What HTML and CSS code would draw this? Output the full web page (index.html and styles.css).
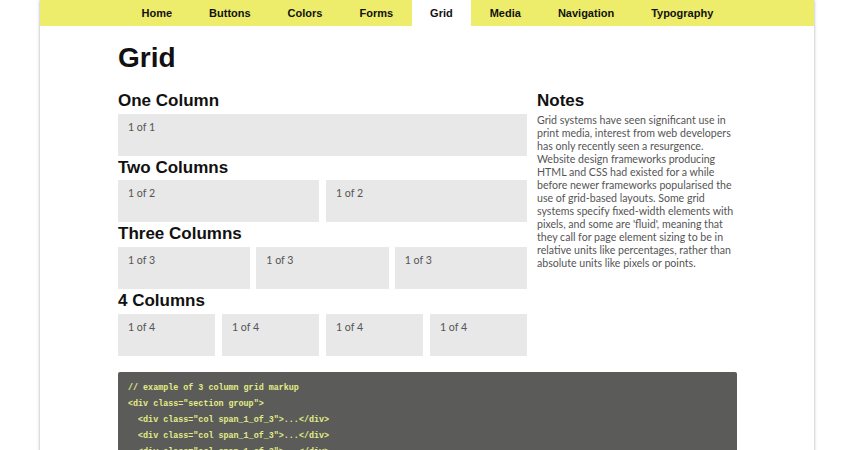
FILE: index.html
```html
<!DOCTYPE html>
<html>
<head>
<meta charset="utf-8">
<title>Grid</title>
<link rel="stylesheet" href="styles.css">
</head>
<body>
<div class="page">
  <nav class="nav">
    <a class="nav-link" href="#">Home</a>
    <a class="nav-link" href="#">Buttons</a>
    <a class="nav-link" href="#">Colors</a>
    <a class="nav-link" href="#">Forms</a>
    <a class="nav-link active" href="#">Grid</a>
    <a class="nav-link" href="#">Media</a>
    <a class="nav-link" href="#">Navigation</a>
    <a class="nav-link" href="#">Typography</a>
  </nav>
  <main class="content">
    <h1 class="title">Grid</h1>
    <div class="layout">
      <div class="main-col">
        <h2 class="sec-title">One Column</h2>
        <div class="row">
          <div class="box">1 of 1</div>
        </div>
        <h2 class="sec-title">Two Columns</h2>
        <div class="row two">
          <div class="box">1 of 2</div>
          <div class="box">1 of 2</div>
        </div>
        <h2 class="sec-title">Three Columns</h2>
        <div class="row three">
          <div class="box">1 of 3</div>
          <div class="box">1 of 3</div>
          <div class="box">1 of 3</div>
        </div>
        <h2 class="sec-title">4 Columns</h2>
        <div class="row four">
          <div class="box">1 of 4</div>
          <div class="box">1 of 4</div>
          <div class="box">1 of 4</div>
          <div class="box">1 of 4</div>
        </div>
      </div>
      <aside class="notes">
        <h2 class="sec-title">Notes</h2>
        <p class="notes-text">Grid systems have seen significant use in print media, interest from web developers has only recently seen a resurgence. Website design frameworks producing HTML and CSS had existed for a while before newer frameworks popularised the use of grid-based layouts. Some grid systems specify fixed-width elements with pixels, and some are 'fluid', meaning that they call for page element sizing to be in relative units like percentages, rather than absolute units like pixels or points.</p>
      </aside>
    </div>
    <pre class="code">// example of 3 column grid markup
&lt;div class="section group"&gt;
  &lt;div class="col span_1_of_3"&gt;...&lt;/div&gt;
  &lt;div class="col span_1_of_3"&gt;...&lt;/div&gt;
  &lt;div class="col span_1_of_3"&gt;...&lt;/div&gt;
&lt;/div&gt;</pre>
  </main>
</div>
</body>
</html>
```
FILE: styles.css
```css
html, body {
  margin: 0;
  padding: 0;
  background: #ffffff;
}
body {
  font-family: "Liberation Sans", Arial, sans-serif;
  color: #111;
}
.page {
  width: 774px;
  margin-left: 40px;
  min-height: 450px;
  background: #fff;
  box-shadow: 0 0 3px rgba(0, 0, 0, 0.35);
}
.nav {
  display: flex;
  height: 26px;
  background: #eded6b;
  padding-left: 83px;
}
.nav-link {
  display: block;
  padding: 0 18.5px;
  line-height: 27px;
  font-size: 11px;
  font-weight: bold;
  color: #111;
  text-decoration: none;
}
.nav-link.active {
  background: #fff;
}
.content {
  padding: 14px 77px 0 78px;
}
.title {
  margin: 0 0 13px;
  font-size: 28px;
  line-height: 36px;
  font-weight: bold;
  color: #111;
}
.layout {
  display: flex;
  gap: 10px;
}
.main-col {
  width: 409px;
}
.notes {
  width: 200px;
}
.sec-title {
  margin: 0;
  font-size: 17px;
  line-height: 24.7px;
  font-weight: bold;
  color: #111;
}
.row {
  display: grid;
  grid-template-columns: 1fr;
  column-gap: 7px;
}
.row.two { grid-template-columns: repeat(2, 1fr); }
.row.three { grid-template-columns: repeat(3, 1fr); column-gap: 6px; }
.row.four { grid-template-columns: repeat(4, 1fr); }
.box {
  box-sizing: border-box;
  height: 42px;
  padding: 5px 10px;
  background: #e8e8e8;
  font-family: Lato, "Open Sans", sans-serif;
  font-size: 10.6px;
  line-height: 16px;
  color: #555;
}
.notes-text {
  margin: 0;
  font-family: Lato, "Open Sans", sans-serif;
  font-size: 10.6px;
  line-height: 13px;
  color: #555;
}
.code {
  margin: 16px 0 0;
  padding: 8px 10px 10px;
  background: #5b5c59;
  color: #e4ec86;
  font-family: "Liberation Mono", "Courier New", monospace;
  font-weight: bold;
  font-size: 8.4px;
  line-height: 16px;
  border-radius: 2px;
}
```
